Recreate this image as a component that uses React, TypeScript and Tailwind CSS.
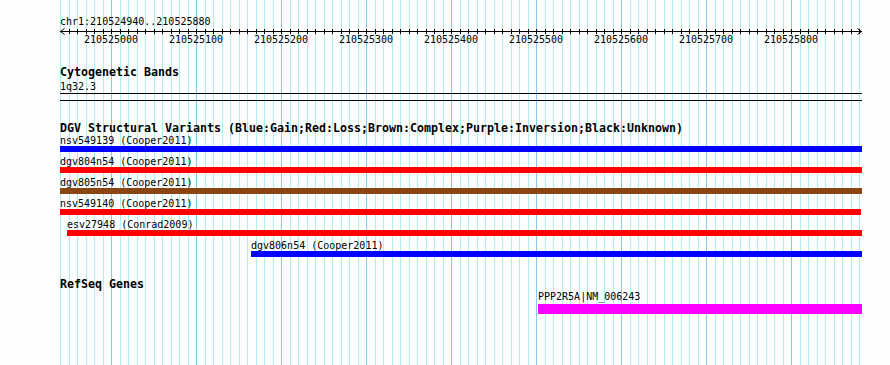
import React from "react";

const START = 210524940;
const PX_PER_BP = 0.85;
const LEFT = 60;

const gridXs = Array.from({ length: 95 }, (_, k) => ({
  k,
  x: Math.round(LEFT + k * 8.5) + 0.5,
}));

const majorLabels = Array.from({ length: 9 }, (_, i) => ({
  label: String(210525000 + i * 100),
  x: (210525000 + i * 100 - START) * PX_PER_BP,
}));

type Feature = {
  name: string;
  barClass: string;
  offsetClass: string;
};

const dgv: Feature[] = [
  { name: "nsv549139 (Cooper2011)", barClass: "w-[802px] bg-[#0000ff]", offsetClass: "ml-0" },
  { name: "dgv804n54 (Cooper2011)", barClass: "w-[802px] bg-[#ff0000]", offsetClass: "ml-0" },
  { name: "dgv805n54 (Cooper2011)", barClass: "w-[802px] bg-[#8b4513]", offsetClass: "ml-0" },
  { name: "nsv549140 (Cooper2011)", barClass: "w-[801px] bg-[#ff0000]", offsetClass: "ml-0" },
  { name: "esv27948 (Conrad2009)", barClass: "w-[795px] bg-[#ff0000]", offsetClass: "ml-[7px]" },
  { name: "dgv806n54 (Cooper2011)", barClass: "w-[611px] bg-[#0000ff]", offsetClass: "ml-[191px]" },
];

const mono = "font-['DejaVu_Sans_Mono',monospace]";

function GridCanvas() {
  return (
    <svg
      className="absolute inset-0"
      width={890}
      height={365}
      shapeRendering="crispEdges"
    >
      {gridXs.map(({ k, x }) => (
        <line
          key={k}
          x1={x}
          x2={x}
          y1={0}
          y2={365}
          stroke={k % 10 === 6 ? "#87c8f2" : "#aeeeee"}
          strokeWidth={1}
        />
      ))}
    </svg>
  );
}

function Ruler() {
  return (
    <svg width={810} height={18} className="block" shapeRendering="crispEdges">
      <line x1={0} x2={802} y1={3.5} y2={3.5} stroke="#000" strokeWidth={1} />
      {gridXs.slice(1).map(({ k, x }) => (
        <line
          key={k}
          x1={x - LEFT}
          x2={x - LEFT}
          y1={1}
          y2={6}
          stroke="#000"
          strokeWidth={1}
        />
      ))}
      <polyline points="4.5,0.5 0.5,3.5 4.5,6.5" fill="none" stroke="#000" strokeWidth={1} shapeRendering="auto" />
      <polyline points="797.5,0.5 801.5,3.5 797.5,6.5" fill="none" stroke="#000" strokeWidth={1} shapeRendering="auto" />
      {majorLabels.map((m) => (
        <text
          key={m.label}
          x={m.x}
          y={15}
          textAnchor="middle"
          fontFamily="'DejaVu Sans Mono', monospace"
          fontSize={10}
          fill="#000"
        >
          {m.label}
        </text>
      ))}
    </svg>
  );
}

function TrackTitle({ children, className }: { children: React.ReactNode; className?: string }) {
  return (
    <div
      className={`h-[13px] whitespace-pre text-[11.63px] leading-[13px] font-bold text-black ${mono} ${className ?? ""}`}
    >
      {children}
    </div>
  );
}

function FeatureRow({ f }: { f: Feature }) {
  return (
    <div className={`flex flex-col ${f.offsetClass}`}>
      <div className={`h-[11px] whitespace-pre text-[10px] leading-[11px] text-black ${mono}`}>{f.name}</div>
      <div className={`h-[6px] ${f.barClass}`} />
      <div className="h-[4px]" />
    </div>
  );
}

export default function App() {
  return (
    <div className="relative h-[365px] w-[890px] overflow-hidden bg-[#fdfefd]">
      <GridCanvas />
      <div className="relative flex flex-col pl-[60px] pt-[15px]">
        <div className={`h-[13px] whitespace-pre text-[10px] leading-[13px] text-black ${mono}`}>
          chr1:210524940..210525880
        </div>
        <Ruler />

        <TrackTitle className="mt-[20px]">Cytogenetic Bands</TrackTitle>
        <div className={`mt-[1px] h-[13px] text-[10px] leading-[13px] text-black ${mono}`}>1q32.3</div>
        <div className="h-[8px] w-[802px] border-y border-black" />

        <TrackTitle className="mt-[21px]">
          DGV Structural Variants (Blue:Gain;Red:Loss;Brown:Complex;Purple:Inversion;Black:Unknown)
        </TrackTitle>
        <div className="flex flex-col">
          {dgv.map((f) => (
            <FeatureRow key={f.name} f={f} />
          ))}
        </div>

        <TrackTitle className="mt-[17px]">RefSeq Genes</TrackTitle>
        <div className="ml-[478px] flex flex-col">
          <div className={`h-[11px] whitespace-pre text-[10px] leading-[11px] text-black ${mono}`}>
            PPP2R5A|NM_006243
          </div>
          <div className="mt-[2px] h-[10px] w-[324px] bg-[#ff00ff]" />
        </div>
      </div>
    </div>
  );
}
